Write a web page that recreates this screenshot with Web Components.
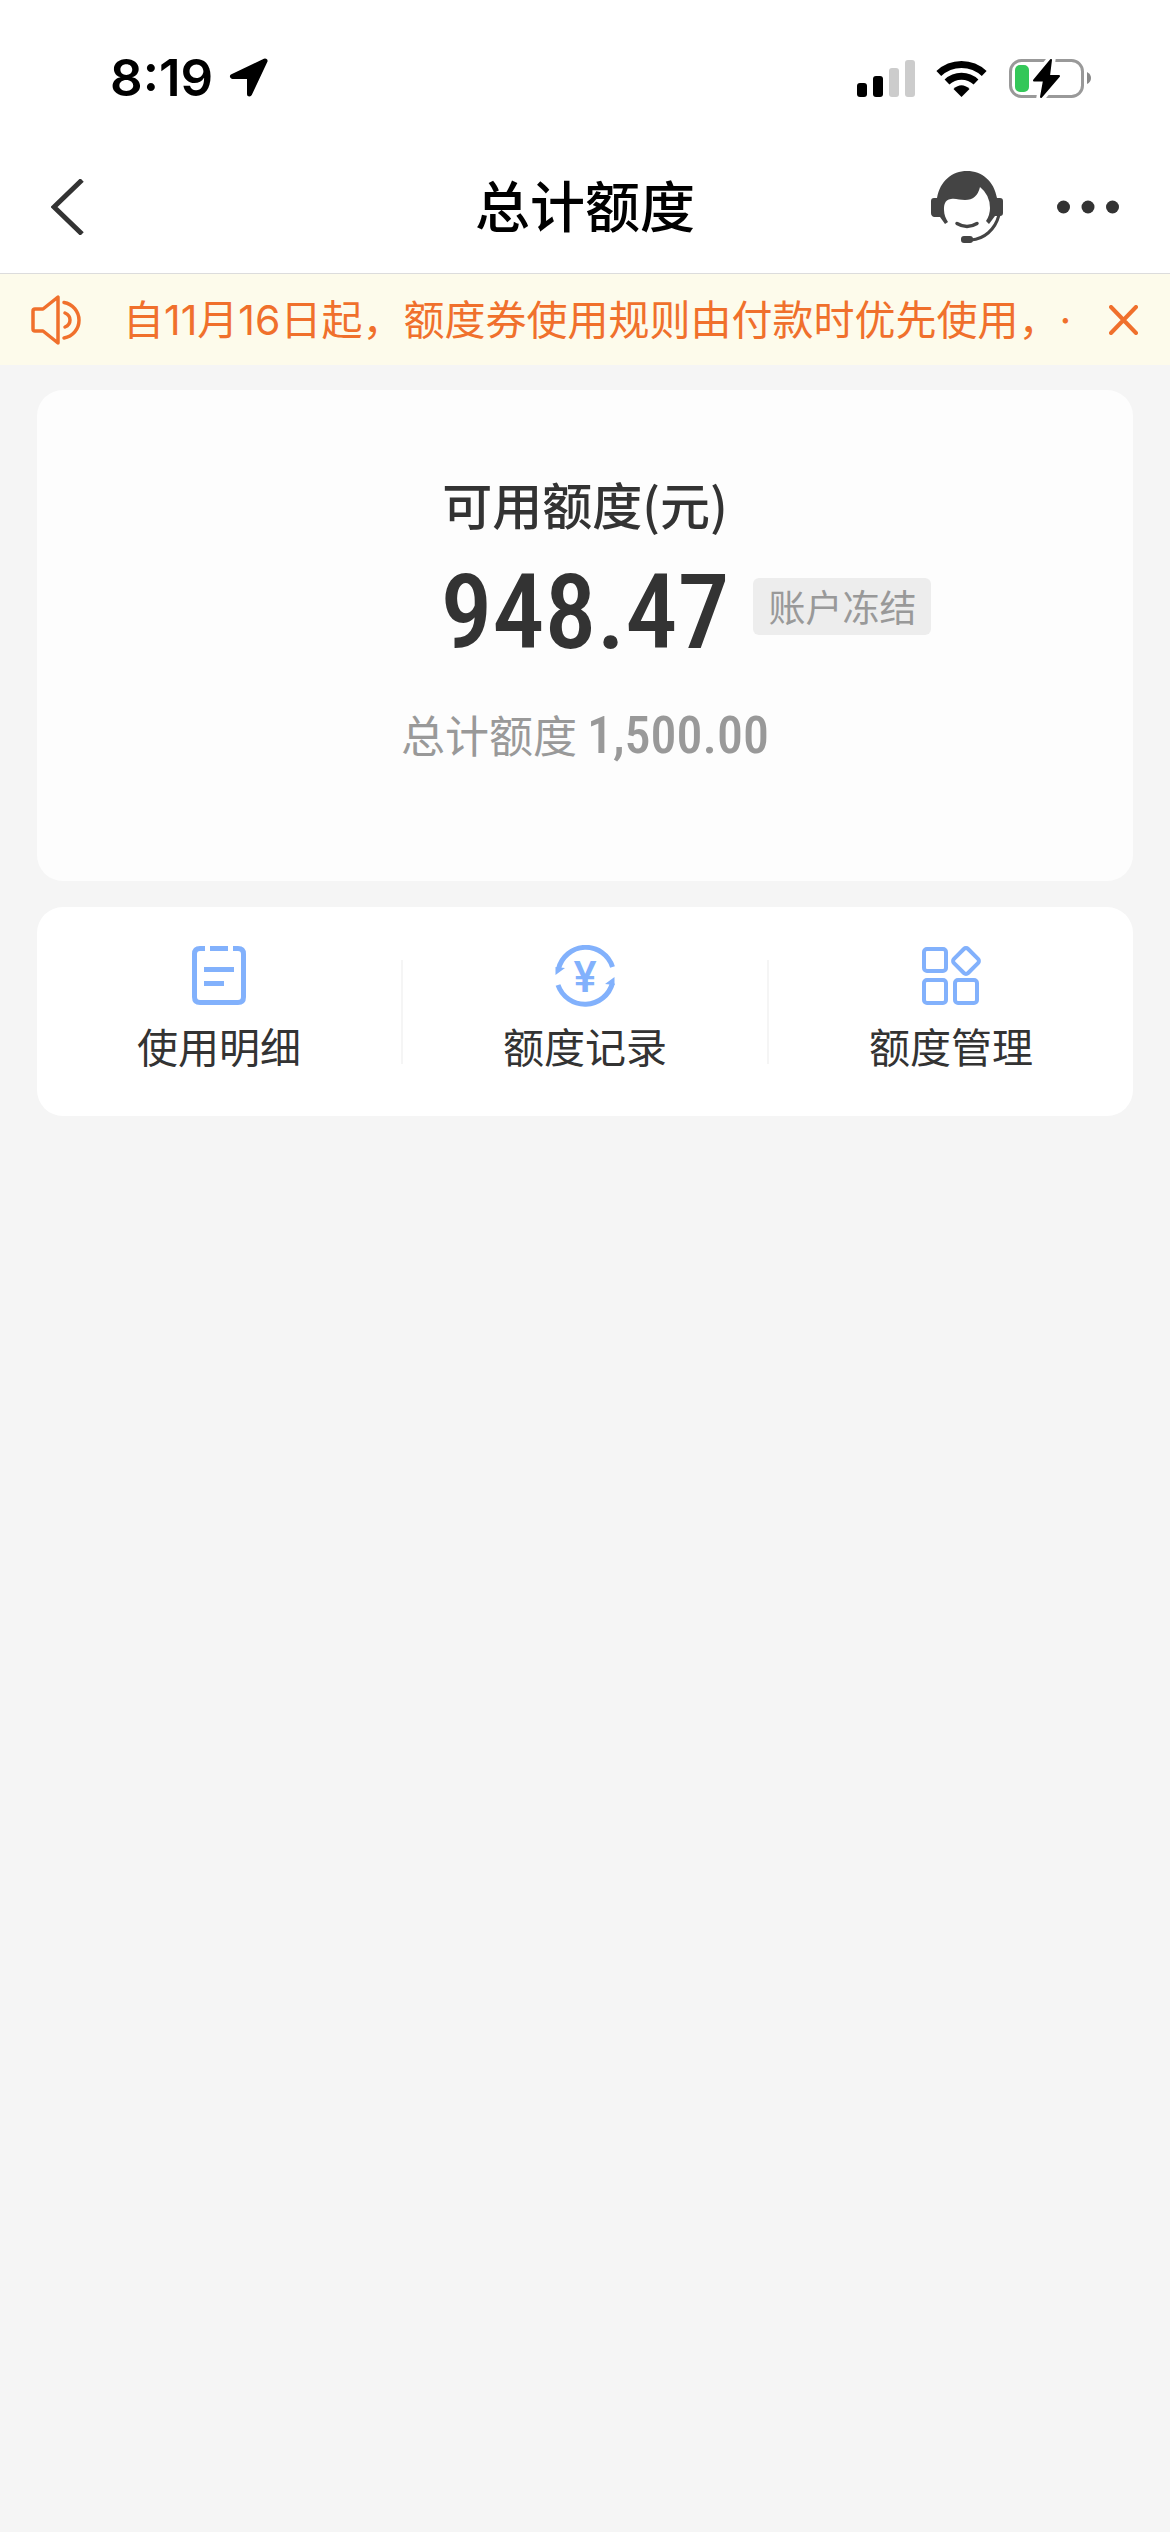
<!DOCTYPE html>
<html lang="zh-CN">
<head>
<meta charset="utf-8">
<meta name="viewport" content="width=device-width, initial-scale=1">
<title>总计额度</title>
<style>
  html { background: #f5f5f5; }
  body {
    margin: 0;
    font-family: "Noto Sans CJK SC", sans-serif;
    color: #333;
  }
</style>
</head>
<body>
<quota-page></quota-page>

<script>
const define = (name, html) => {
  const template = document.createElement('template');
  template.innerHTML = `<style>
    *, :host { box-sizing: border-box; }
    svg { display: block; flex: none; }
    button { appearance: none; border: 0; padding: 0; margin: 0; background: none; color: inherit; font: inherit; }
  </style>` + html;
  customElements.define(name, class extends HTMLElement {
    constructor() {
      super();
      this.attachShadow({ mode: 'open' }).append(template.content.cloneNode(true));
    }
  });
};

define('status-bar', `
  <style>
    :host { display: flex; justify-content: space-between; align-items: center; height: 141px; padding: 15px 78px 0 110px; background: #fff; color: #000; }
    .side { display: flex; align-items: center; gap: 16px; }
    .system { gap: 21px; }
    time { font: 600 51px/60px Inter, sans-serif; }
  </style>
  <div class="side">
    <time>8:19</time>
    <svg width="40" height="40" viewBox="0 0 40 40" aria-hidden="true">
      <path d="M36 3 3.5 18.500H20.500V36Z" fill="#000" stroke="#000" stroke-width="5" stroke-linejoin="round"/>
    </svg>
  </div>
  <div class="side system">
    <svg width="58" height="38" viewBox="0 0 58 38" aria-hidden="true">
      <rect y="24" width="10" height="14" rx="3"/>
      <rect x="16" y="17" width="10" height="21" rx="3"/>
      <rect x="32" y="9" width="10" height="29" rx="3" fill="#ccc"/>
      <rect x="48" y="1" width="10" height="37" rx="3" fill="#ccc"/>
    </svg>
    <svg width="51" height="38" viewBox="0 0 51 38" aria-hidden="true">
      <g fill="none" stroke="#000">
        <path d="M2.800 14.500A33 33 0 0 1 48.200 14.500" stroke-width="7"/>
        <path d="M11 23A21 21 0 0 1 40 23" stroke-width="7"/>
      </g>
      <path d="M25.500 38 17.500 30Q25.500 22.500 33.500 30Z"/>
    </svg>
    <svg width="84" height="41" viewBox="0 0 84 41" aria-hidden="true">
      <rect x="2.500" y="2.500" width="72" height="36" rx="11" fill="none" stroke="#999" stroke-width="3"/>
      <path d="M79 14q4 2 4 6t-4 6z" fill="#888"/>
      <path d="M43 2 26 22.500H36L33 39 51 18H41Z" fill="#fff" stroke="#fff" stroke-width="9"/>
      <rect x="7" y="7" width="14" height="27" rx="5" fill="#34c759"/>
      <path d="M43 2 26 22.500H36L33 39 51 18H41Z" stroke="#000" stroke-width="2" stroke-linejoin="round"/>
    </svg>
  </div>
`);

define('nav-bar', `
  <style>
    :host { display: grid; grid-template-columns: 1fr auto 1fr; align-items: center; height: 133px; padding: 0 51px; background: #fff; border-bottom: 1px solid #dcdcdc; }
    h1 { margin: 0; padding-bottom: 8px; font-size: 55px; line-height: 80px; font-weight: 500; color: #000; }
    .tools { display: flex; justify-content: flex-end; align-items: center; gap: 54px; }
  </style>
  <button aria-label="返回">
    <svg width="34" height="56" viewBox="0 0 34 56"><path d="M31 1 3 28 31 55" fill="none" stroke="#333" stroke-width="5"/></svg>
  </button>
  <h1><slot></slot></h1>
  <div class="tools">
    <button aria-label="客服">
      <svg width="72" height="72" viewBox="0 0 72 72" fill="#444">
        <path d="M0 30Q0 27 3 27H6C9 10 21 0 36 0S63 10 66 27H69Q72 27 72 30V42Q72 45 69 45H64L58 53 55 50Q59 44 59 37 59 24 49 16 46 29 34 29C29 29 24 27 20 28 13 29 13 35 13 39 13 44 15 48 17 51L14 53 9 46H3Q0 45 0 42Z"/>
        <g fill="none" stroke="#444" stroke-linecap="round">
          <path d="M26 52.500Q36 58.500 46 52.500" stroke-width="3.500"/>
          <path d="M68 44C64 59 53 68 40 69" stroke-width="3"/>
        </g>
        <rect x="30" y="65" width="12" height="7" rx="3"/>
      </svg>
    </button>
    <button aria-label="更多">
      <svg width="62" height="14" viewBox="0 0 62 14" fill="#333">
        <circle cx="6.500" cy="7" r="6.500"/><circle cx="31" cy="7" r="6.500"/><circle cx="55.500" cy="7" r="6.500"/>
      </svg>
    </button>
  </div>
`);

define('notice-bar', `
  <style>
    :host { display: flex; align-items: center; height: 91px; padding: 0 32px 0 31px; background: #fdfbeb; color: #f0702c; }
    p { flex: 1; min-width: 0; margin: 0 40px 0 42px; overflow: hidden; white-space: nowrap; font: 400 41px/60px Inter, "Noto Sans CJK SC", sans-serif; text-spacing-trim: space-all; }
  </style>
  <svg width="50" height="50" viewBox="0 0 50 50" fill="none" stroke="currentColor" stroke-width="3.500" stroke-linecap="round" stroke-linejoin="round" aria-hidden="true">
    <path d="M4 14H12L27 2V48L12 36H4Q2 36 2 34V16Q2 14 4 14Z"/>
    <path d="M33 7.500A18 18 0 0 1 33 43M34 18Q39 20 39 25T34 32"/>
  </svg>
  <p><slot></slot></p>
  <button aria-label="关闭">
    <svg width="29" height="30" viewBox="0 0 29 30"><path d="M2 2 27 28M27 2 2 28" stroke="currentColor" stroke-width="4" stroke-linecap="round"/></svg>
  </button>
`);

define('quota-card', `
  <style>
    :host { display: block; padding: 78px 0 115px; border-radius: 26px; background: #fdfdfd; text-align: center; }
    h2 { margin: 0; font-size: 50px; line-height: 70px; font-weight: 500; }
    .amount { display: grid; grid-template-columns: 1fr auto 1fr; align-items: center; margin: 21px 0 37px; }
    .num { font-family: "Roboto Condensed", "Liberation Sans Narrow", Roboto, sans-serif; font-weight: 500; }
    strong { grid-column: 2; font-size: 104px; line-height: 108px; }
    .tag { justify-self: start; margin: 0 0 14px 24px; padding: 0 15px; border-radius: 6px; background: #ededed; color: #999; font-size: 37px; line-height: 57px; }
    p { margin: 0; color: #999; font-size: 44px; line-height: 60px; }
    p .num { font-size: 52px; }
  </style>
  <h2>可用额度(元)</h2>
  <div class="amount">
    <strong class="num"><slot name="available"></slot></strong>
    <span class="tag"><slot name="state"></slot></span>
  </div>
  <p>总计额度 <span class="num"><slot name="total"></slot></span></p>
`);

define('action-list', `
  <style>
    :host { display: flex; align-items: center; height: 209px; border-radius: 26px; background: #fff; }
    ::slotted(*) { flex: 1; }
    ::slotted(:not(:first-child)) { border-left: 2px solid #f5f5f5; }
  </style>
  <slot></slot>
`);

define('action-item', `
  <style>
    :host { display: block; height: 104px; }
    a { display: flex; flex-direction: column; align-items: center; gap: 8px; margin-top: -15px; color: #333; text-decoration: none; font-size: 41px; line-height: 60px; }
    ::slotted(svg) { display: block; }
  </style>
  <a href="#"><slot name="icon"></slot><span><slot></slot></span></a>
`);

define('quota-page', `
  <style>
    :host { display: block; }
    main { display: flex; flex-direction: column; gap: 26px; padding: 25px 37px; }
  </style>
  <status-bar></status-bar>
  <nav-bar>总计额度</nav-bar>
  <notice-bar>自11月16日起，额度券使用规则由付款时优先使用，·</notice-bar>
  <main>
    <quota-card>
      <span slot="available">948.47</span>
      <span slot="state">账户冻结</span>
      <span slot="total">1,500.00</span>
    </quota-card>
    <action-list>
      <action-item>
        <svg slot="icon" width="62" height="62" viewBox="0 0 62 62" fill="none" stroke="#82b1fc" stroke-width="5" aria-hidden="true">
          <path d="M17 3.500H12Q6.500 3.500 6.500 9V52Q6.500 57.500 12 57.500H50Q55.500 57.500 55.500 52V9Q55.500 3.500 50 3.500H45M22 3.500H40M16 24.500H46M16 38.500H36"/>
        </svg>
        使用明细
      </action-item>
      <action-item>
        <svg slot="icon" width="62" height="62" viewBox="0 0 62 62" aria-hidden="true">
          <g fill="none" stroke="#82b1fc" stroke-width="5">
            <path d="M4.500 24A28 28 0 0 1 58.500 22M4 40A28.500 28.500 0 0 0 58.500 38"/>
          </g>
          <path d="M1.500 30V22L11 23ZM60.500 32V40L51 39Z" fill="#82b1fc"/>
          <text x="31" y="47" text-anchor="middle" font-family="Inter, sans-serif" font-weight="600" font-size="42" fill="#82b1fc">¥</text>
        </svg>
        额度记录
      </action-item>
      <action-item>
        <svg slot="icon" width="62" height="62" viewBox="0 0 62 62" fill="none" stroke="#82b1fc" stroke-width="4" aria-hidden="true">
          <rect x="4" y="4" width="22" height="22" rx="3"/>
          <rect x="4" y="35" width="22" height="23" rx="3"/>
          <rect x="35" y="35" width="22" height="23" rx="3"/>
          <rect x="36" y="6" width="20" height="20" rx="3" transform="rotate(45 46 16)"/>
        </svg>
        额度管理
      </action-item>
    </action-list>
  </main>
`);
</script>
</body>
</html>
